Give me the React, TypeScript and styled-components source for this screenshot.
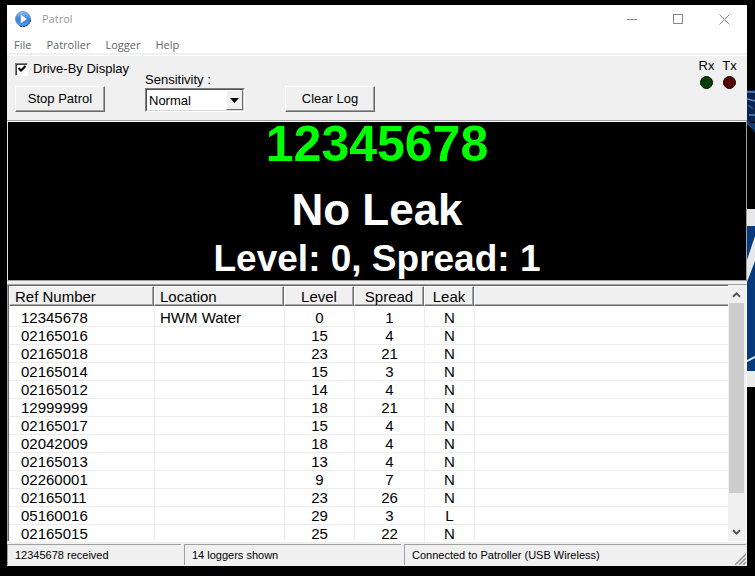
import React, { useState } from "react";
import styled, { createGlobalStyle } from "styled-components";

const GlobalStyle = createGlobalStyle`
  * { box-sizing: border-box; }
  body {
    margin: 0;
    background: #000;
    color: #000;
    font-family: "Liberation Sans", Arial, sans-serif;
    font-size: 13px;
  }
  button, select, input { font: inherit; color: inherit; margin: 0; }
`;

const Desktop = styled.div`
  display: flex;
  height: 100vh;
  padding: 5px 0 10px 7px;
`;

const Window = styled.main`
  flex: 1;
  min-width: 0;
  display: flex;
  flex-direction: column;
  background: #f0f0f0;
`;

const Wallpaper = styled.svg`
  flex: none;
  width: 8px;
  height: 561px;
`;

const TitleBar = styled.header`
  display: flex;
  align-items: center;
  height: 28px;
  padding-left: 8px;
  background: #fff;
`;

const Title = styled.h1`
  flex: 1;
  margin: 0 0 0 11px;
  font: 400 11px/16px "Open Sans", sans-serif;
  color: #999;
`;

const CaptionButton = styled.button`
  display: grid;
  place-items: center;
  width: 46px;
  height: 28px;
  padding: 0;
  border: 0;
  background: none;
`;

const MenuBar = styled.nav`
  display: flex;
  gap: 15px;
  height: 22px;
  padding-left: 7px;
  background: #fff;
  border-bottom: 2px solid #f0f0f0;
`;

const MenuItem = styled.button`
  padding: 0;
  border: 0;
  background: none;
  font: 400 11px/24px "Open Sans", sans-serif;
  color: #666;
`;

const Toolbar = styled.section`
  display: flex;
  align-items: flex-end;
  height: 66px;
  padding: 0 10px 8px 8px;
  border-top: 1px solid #fff;
  border-bottom: 1px solid #a0a0a0;
`;

const ToolGroup = styled.div<{ $gap: number }>`
  display: flex;
  flex-direction: column;
  gap: ${(p) => p.$gap}px;
  margin-right: 40px;
`;

const CheckLabel = styled.label`
  position: relative;
  display: flex;
  align-items: center;
  gap: 5px;
  line-height: 16px;
  white-space: nowrap;
  width: 90px;
`;

const CheckBox = styled.input`
  appearance: none;
  flex: none;
  width: 13px;
  height: 13px;
  background: #fff;
  border: 1px solid;
  border-color: #808080 #fff #fff #808080;
  box-shadow: inset 1px 1px #404040;
  & + svg { position: absolute; left: 3px; top: 4px; pointer-events: none; visibility: hidden; }
  &:checked + svg { visibility: visible; }
`;

const PushButton = styled.button`
  width: 90px;
  height: 26px;
  padding: 0;
  background: #f0f0f0;
  border: 1px solid;
  border-color: #fff #696969 #696969 #fff;
  box-shadow: inset -1px -1px #a0a0a0;
  line-height: 20px;
`;

const FieldLabel = styled.label`
  line-height: 16px;
`;

const SelectFrame = styled.div`
  position: relative;
  width: 100px;
  height: 24px;
  border: 1px solid;
  border-color: #808080 #fff #fff #808080;
`;

const Select = styled.select`
  appearance: none;
  display: block;
  width: 100%;
  height: 100%;
  padding: 0 18px 0 2px;
  border: 1px solid;
  border-color: #505050 #d8d8d8 #d8d8d8 #505050;
  border-radius: 0;
  background: #fff;
`;

const DropArrow = styled.span`
  position: absolute;
  top: 1px;
  right: 1px;
  bottom: 1px;
  width: 17px;
  display: grid;
  place-items: center;
  pointer-events: none;
  background: #f0f0f0;
  border: 1px solid;
  border-color: #fff #696969 #696969 #fff;
`;

const Lamps = styled.div`
  display: flex;
  gap: 8px;
  margin-left: auto;
  align-self: flex-start;
  padding-top: 2px;
`;

const LampBox = styled.div`
  display: flex;
  flex-direction: column;
  align-items: center;
  gap: 2px;
  width: 15px;
  line-height: 16px;
`;

const Lamp = styled.i<{ $color: string }>`
  width: 13px;
  height: 13px;
  border: 1px solid #000;
  border-radius: 50%;
  background: ${(p) => p.$color};
`;

const Display = styled.section`
  display: flex;
  flex-direction: column;
  align-items: center;
  height: 160px;
  border: 1px solid;
  border-color: #fff #a0a0a0 #a0a0a0 #e3e3e3;
  background: #000;
  color: #fff;
  font-weight: 700;
  white-space: nowrap;
`;

const RefLine = styled.div`
  font-size: 50px;
  line-height: 44px;
  color: #0f0;
  margin-bottom: 18px;
`;

const LeakLine = styled.div`
  font-size: 44px;
  line-height: 52px;
`;

const ReadingLine = styled.div`
  font-size: 37px;
  line-height: 46px;
`;

const ListView = styled.section`
  flex: 1;
  min-height: 0;
  display: flex;
  margin-top: 3px;
  border: 1px solid;
  border-color: #a0a0a0 #fff #fff #a0a0a0;
`;

const ListBody = styled.div`
  flex: 1;
  min-width: 0;
  overflow: hidden;
  background: #fff;
  border: 1px solid #696969;
  border-width: 1px 0 0 1px;
`;

const LogTable = styled.table`
  width: 100%;
  table-layout: fixed;
  border-collapse: separate;
  border-spacing: 0;
  font-size: 15px;
  line-height: 17px;
  tbody tr:first-child td { height: 21px; padding-top: 3px; }
`;

const Col = styled.col<{ $width?: number }>`
  width: ${(p) => (p.$width ? `${p.$width}px` : "auto")};
`;

const HeadCell = styled.th<{ $center?: boolean; $last?: boolean }>`
  height: 20px;
  padding: ${(p) => (p.$center ? "0" : "0 0 0 5px")};
  background: #f0f0f0;
  border: 1px solid;
  border-color: #fff #696969 #696969 #fff;
  border-right-width: ${(p) => (p.$last ? 0 : 1)}px;
  box-shadow: inset ${(p) => (p.$last ? 0 : -1)}px -1px #a8a8a8;
  font-weight: 400;
  text-align: ${(p) => (p.$center ? "center" : "left")};
`;

const Cell = styled.td<{ $center?: boolean; $first?: boolean }>`
  height: 18px;
  padding: 0 0 0 ${(p) => (p.$first ? 12 : p.$center ? 0 : 5)}px;
  border-bottom: 1px solid #ececec;
  border-left: ${(p) => (p.$first ? 0 : 1)}px solid #ececec;
  text-align: ${(p) => (p.$center ? "center" : "left")};
`;

const ScrollBar = styled.div`
  display: flex;
  flex-direction: column;
  width: 18px;
  margin-top: 1px;
  padding: 0 2px 0 1px;
  background: #f0f0f0;
`;

const ScrollButton = styled.button`
  display: grid;
  place-items: center;
  flex: none;
  height: 17px;
  padding: 0;
  border: 0;
  background: #f0f0f0;
`;

const ScrollTrack = styled.div`
  flex: 1;
`;

const ScrollThumb = styled.div`
  height: 86%;
  background: #cdcdcd;
`;

const StatusBar = styled.footer`
  display: flex;
  gap: 3px;
  height: 24px;
  padding: 2px 1px 1px 0;
`;

const StatusPanel = styled.div<{ $width?: number }>`
  display: flex;
  justify-content: space-between;
  flex: ${(p) => (p.$width ? `0 0 ${p.$width}px` : "1")};
  padding-left: 7px;
  border-top: 1px solid #a0a0a0;
  border-left: 1px solid #a0a0a0;
  font-size: 11px;
  line-height: 21px;
`;

const Grip = styled.svg`
  align-self: flex-end;
`;

type LogRow = [string, string, number, number, string];

const rows: LogRow[] = [
  ["12345678", "HWM Water", 0, 1, "N"],
  ["02165016", "", 15, 4, "N"],
  ["02165018", "", 23, 21, "N"],
  ["02165014", "", 15, 3, "N"],
  ["02165012", "", 14, 4, "N"],
  ["12999999", "", 18, 21, "N"],
  ["02165017", "", 15, 4, "N"],
  ["02042009", "", 18, 4, "N"],
  ["02165013", "", 13, 4, "N"],
  ["02260001", "", 9, 7, "N"],
  ["02165011", "", 23, 26, "N"],
  ["05160016", "", 29, 3, "L"],
  ["02165015", "", 25, 22, "N"],
];

const AppIcon = () => (
  <svg width="16" height="16" viewBox="0 0 16 16" aria-hidden="true">
    <defs>
      <linearGradient id="orb" x1="0" y1="0" x2="0" y2="1">
        <stop offset="0" stopColor="#8fc0f2" />
        <stop offset="0.5" stopColor="#3b82d8" />
        <stop offset="1" stopColor="#4a9bf0" />
      </linearGradient>
    </defs>
    <circle cx="8" cy="8" r="7.5" fill="url(#orb)" stroke="#5a8fd0" strokeWidth="0.8" />
    <path d="M5 15 A7.5 7.5 0 0 0 15.5 8.5" fill="none" stroke="#0a1c3c" strokeDasharray="2 1" />
    <path d="M5.8 3.8 L12 8 L5.8 12.2 Z" fill="#fff" />
  </svg>
);

const Chevron = ({ down }: { down?: boolean }) => (
  <svg width="9" height="7" viewBox="0 0 9 7" aria-hidden="true">
    <path d={down ? "M1 1.2 L4.5 4.7 L8 1.2" : "M1 5.8 L4.5 2.3 L8 5.8"} fill="none" stroke="#555" strokeWidth="2" />
  </svg>
);

export default function App() {
  const [driveBy, setDriveBy] = useState(true);
  const [sensitivity, setSensitivity] = useState("Normal");

  return (
    <>
      <GlobalStyle />
      <Desktop>
        <Window>
          <TitleBar>
            <AppIcon />
            <Title>Patrol</Title>
            <CaptionButton aria-label="Minimize">
              <svg width="11" height="11"><path d="M0 5.5 H10" stroke="#888" /></svg>
            </CaptionButton>
            <CaptionButton aria-label="Maximize">
              <svg width="11" height="11"><rect x="0.5" y="0.5" width="9" height="9" fill="none" stroke="#888" /></svg>
            </CaptionButton>
            <CaptionButton aria-label="Close">
              <svg width="11" height="11"><path d="M0.5 0.5 L10.5 10.5 M10.5 0.5 L0.5 10.5" stroke="#888" /></svg>
            </CaptionButton>
          </TitleBar>
          <MenuBar>
            <MenuItem>File</MenuItem>
            <MenuItem>Patroller</MenuItem>
            <MenuItem>Logger</MenuItem>
            <MenuItem>Help</MenuItem>
          </MenuBar>

          <Toolbar>
            <ToolGroup $gap={9}>
              <CheckLabel>
                <CheckBox type="checkbox" checked={driveBy} onChange={(e) => setDriveBy(e.target.checked)} />
                <svg width="8" height="8" viewBox="0 0 8 8"><path d="M0.5 3 L3 5.5 L7.5 1" fill="none" stroke="#000" strokeWidth="2" /></svg>
                Drive-By Display
              </CheckLabel>
              <PushButton>Stop Patrol</PushButton>
            </ToolGroup>
            <ToolGroup $gap={0}>
              <FieldLabel htmlFor="sensitivity">Sensitivity :</FieldLabel>
              <SelectFrame>
                <Select id="sensitivity" value={sensitivity} onChange={(e) => setSensitivity(e.target.value)}>
                  <option>Normal</option>
                </Select>
                <DropArrow>
                  <svg width="9" height="5"><path d="M0 0 H9 L4.5 5 Z" /></svg>
                </DropArrow>
              </SelectFrame>
            </ToolGroup>
            <ToolGroup $gap={0}>
              <PushButton>Clear Log</PushButton>
            </ToolGroup>
            <Lamps>
              <LampBox>Rx<Lamp $color="#004000" /></LampBox>
              <LampBox>Tx<Lamp $color="#5a0000" /></LampBox>
            </Lamps>
          </Toolbar>

          <Display>
            <RefLine>12345678</RefLine>
            <LeakLine>No Leak</LeakLine>
            <ReadingLine>Level: 0, Spread: 1</ReadingLine>
          </Display>

          <ListView>
            <ListBody>
              <LogTable>
                <colgroup>
                  <Col $width={145} />
                  <Col $width={130} />
                  <Col $width={70} />
                  <Col $width={70} />
                  <Col $width={50} />
                  <Col />
                </colgroup>
                <thead>
                  <tr>
                    <HeadCell>Ref Number</HeadCell>
                    <HeadCell>Location</HeadCell>
                    <HeadCell $center>Level</HeadCell>
                    <HeadCell $center>Spread</HeadCell>
                    <HeadCell $center>Leak</HeadCell>
                    <HeadCell $last />
                  </tr>
                </thead>
                <tbody>
                  {rows.map(([ref, location, level, spread, leak]) => (
                    <tr key={ref}>
                      <Cell $first>{ref}</Cell>
                      <Cell>{location}</Cell>
                      <Cell $center>{level}</Cell>
                      <Cell $center>{spread}</Cell>
                      <Cell $center>{leak}</Cell>
                      <Cell />
                    </tr>
                  ))}
                </tbody>
              </LogTable>
            </ListBody>
            <ScrollBar>
              <ScrollButton aria-label="Scroll up"><Chevron /></ScrollButton>
              <ScrollTrack><ScrollThumb /></ScrollTrack>
              <ScrollButton aria-label="Scroll down"><Chevron down /></ScrollButton>
            </ScrollBar>
          </ListView>

          <StatusBar>
            <StatusPanel $width={174}>12345678 received</StatusPanel>
            <StatusPanel $width={217}>14 loggers shown</StatusPanel>
            <StatusPanel>
              Connected to Patroller (USB Wireless)
              <Grip width="12" height="12" viewBox="0 0 12 12">
                <path d="M1 12 L12 1 M5 12 L12 5 M9 12 L12 9" stroke="#999" strokeWidth="1.6" />
              </Grip>
            </StatusPanel>
          </StatusBar>
        </Window>
        <Wallpaper viewBox="0 0 8 561" preserveAspectRatio="none" aria-hidden="true">
          <rect y="85" width="8" height="32" fill="#0b2350" />
          <path d="M0 87 H8 M0 94 L8 96 M2 110 H8" stroke="#5b8fc4" strokeWidth="1.5" />
          <path d="M1 100 L6 104 M0 117 L8 122 V125 L0 118" stroke="#1f4c8c" strokeWidth="2" />
          <path d="M0 118 Q5 121 8 128 V118 Z" fill="#163a70" />
          <rect y="204" width="8" height="17" fill="#e8e8ea" />
          <rect y="221" width="8" height="146" fill="#063a7c" />
          <path d="M8 231 V256 L0 277 V255 Z" fill="#e8e8ea" />
          <path d="M0 356 L8 352" stroke="#d8ecf8" strokeWidth="2" />
          <rect y="366" width="8" height="16" fill="#ececec" />
        </Wallpaper>
      </Desktop>
    </>
  );
}
